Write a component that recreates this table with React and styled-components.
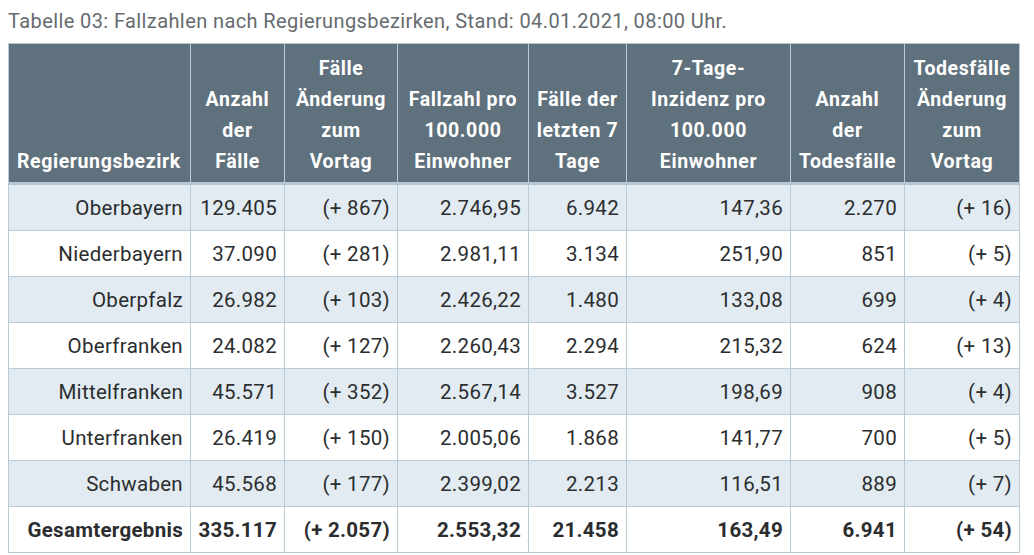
import React, { Fragment } from 'react'
import styled, { createGlobalStyle } from 'styled-components'

const GlobalStyle = createGlobalStyle`
  body {
    margin: 0;
    background: #fff;
    font-family: Roboto, "Liberation Sans", sans-serif;
  }
`

const Wrapper = styled.div`
  padding: 6px 15px 0 8px;
`

const Caption = styled.div`
  font-size: 20px;
  letter-spacing: 0.4px;
  line-height: 30px;
  color: #666b6e;
  margin-bottom: 7px;
`

const Table = styled.table`
  width: 1011px;
  table-layout: fixed;
  border-collapse: collapse;
  border: 1px solid #b8cbd7;
`

const HeadCell = styled.th`
  background: #5f717d;
  color: #fff;
  font-weight: 700;
  font-size: 19.5px;
  letter-spacing: 0.6px;
  line-height: 31px;
  text-align: ${p => (p.left ? 'left' : 'center')};
  vertical-align: bottom;
  white-space: nowrap;
  padding: 9px ${p => (p.left ? 8 : 2)}px 5px;
  border-left: 1px solid #b8cbd7;
  border-bottom: 3px solid #b3c6d2;
`

const Row = styled.tr`
  background: ${p => (p.striped ? '#e1ebf1' : '#fff')};
`

const Cell = styled.td`
  font-size: 20.5px;
  letter-spacing: 0.3px;
  font-weight: ${p => (p.bold ? 700 : 400)};
  color: #2b2d2f;
  text-align: right;
  height: 45px;
  padding: 0 7px;
  border: 1px solid #b8cbd7;
`

const widths = [182, 94, 113, 131, 98, 164, 114, 115]

// header lines as they break in the published table
const headers = [
  ['Regierungsbezirk'],
  ['Anzahl', 'der', 'Fälle'],
  ['Fälle', 'Änderung', 'zum', 'Vortag'],
  ['Fallzahl pro', '100.000', 'Einwohner'],
  ['Fälle der', 'letzten 7', 'Tage'],
  ['7-Tage-', 'Inzidenz pro', '100.000', 'Einwohner'],
  ['Anzahl', 'der', 'Todesfälle'],
  ['Todesfälle', 'Änderung', 'zum', 'Vortag']
]

const rows = [
  ['Oberbayern', '129.405', '(+ 867)', '2.746,95', '6.942', '147,36', '2.270', '(+ 16)'],
  ['Niederbayern', '37.090', '(+ 281)', '2.981,11', '3.134', '251,90', '851', '(+ 5)'],
  ['Oberpfalz', '26.982', '(+ 103)', '2.426,22', '1.480', '133,08', '699', '(+ 4)'],
  ['Oberfranken', '24.082', '(+ 127)', '2.260,43', '2.294', '215,32', '624', '(+ 13)'],
  ['Mittelfranken', '45.571', '(+ 352)', '2.567,14', '3.527', '198,69', '908', '(+ 4)'],
  ['Unterfranken', '26.419', '(+ 150)', '2.005,06', '1.868', '141,77', '700', '(+ 5)'],
  ['Schwaben', '45.568', '(+ 177)', '2.399,02', '2.213', '116,51', '889', '(+ 7)']
]

const total = ['Gesamtergebnis', '335.117', '(+ 2.057)', '2.553,32', '21.458', '163,49', '6.941', '(+ 54)']

export default function App () {
  return (
    <Wrapper>
      <GlobalStyle />
      <Caption>Tabelle 03: Fallzahlen nach Regierungsbezirken, Stand: 04.01.2021, 08:00 Uhr.</Caption>
      <Table>
        <colgroup>
          {widths.map((w, i) => <col key={i} style={{ width: w }} />)}
        </colgroup>
        <thead>
          <tr>
            {headers.map((lines, i) => (
              <HeadCell key={i} left={i === 0}>
                {lines.map((l, k) => (
                  <Fragment key={k}>
                    {k > 0 && <br />}
                    {l}
                  </Fragment>
                ))}
              </HeadCell>
            ))}
          </tr>
        </thead>
        <tbody>
          {rows.map((r, i) => (
            <Row key={i} striped={i % 2 === 0}>
              {r.map((c, j) => <Cell key={j}>{c}</Cell>)}
            </Row>
          ))}
          <Row>
            {total.map((c, j) => <Cell key={j} bold>{c}</Cell>)}
          </Row>
        </tbody>
      </Table>
    </Wrapper>
  )
}
